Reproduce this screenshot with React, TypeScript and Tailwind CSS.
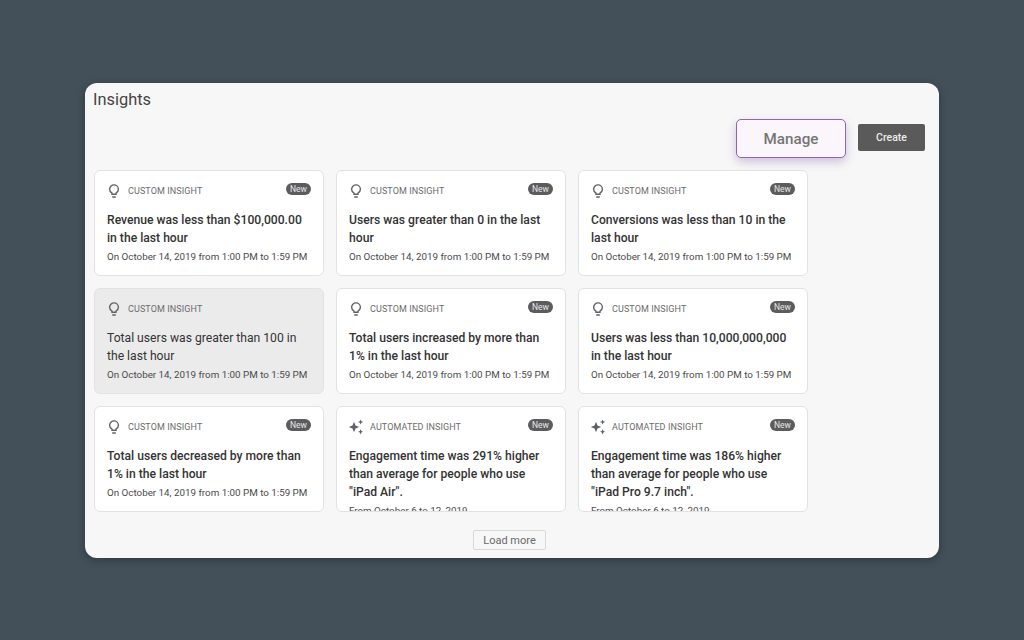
import React from "react";

function Bulb() {
  return (
    <svg width="14" height="16" viewBox="0 0 14 16" fill="none" stroke="#5f6368" strokeWidth="1.4" className="shrink-0">
      <path d="M5 10.2C3.5 9.3 2.6 7.9 2.6 6.3 2.6 3.8 4.6 1.9 7 1.9s4.4 1.9 4.4 4.4c0 1.6-.9 3-2.4 3.9v1.1H5z" />
      <path d="M5.2 14h3.6" strokeWidth="1.5" />
    </svg>
  );
}

function Spark() {
  return (
    <svg width="16" height="16" viewBox="0 0 16 16" fill="#5f6368" className="shrink-0 -ml-[1px]">
      <path d="M6 2.8l1.5 3.7L11.2 8 7.500 9.500 6 13.200 4.500 9.500 .8 8l3.700-1.500z" />
      <path d="M12.6 .4l.8 1.800 1.800.8-1.800.8-.8 1.800-.8-1.800L10 3l1.800-.8z" />
      <path d="M12.6 10.200l.8 1.800 1.800.8-1.800.8-.8 1.800-.8-1.800-1.800-.8 1.800-.8z" />
    </svg>
  );
}

type C = { kind: "c" | "a"; lines: string[]; sub: string; isNew?: boolean; active?: boolean };
const custom = "On October 14, 2019 from 1:00 PM to 1:59 PM";
const cards: C[] = [
  { kind: "c", lines: ["Revenue was less than $100,000.00", "in the last hour"], sub: custom, isNew: true },
  { kind: "c", lines: ["Users was greater than 0 in the last", "hour"], sub: custom, isNew: true },
  { kind: "c", lines: ["Conversions was less than 10 in the", "last hour"], sub: custom, isNew: true },
  { kind: "c", lines: ["Total users was greater than 100 in", "the last hour"], sub: custom, active: true },
  { kind: "c", lines: ["Total users increased by more than", "1% in the last hour"], sub: custom, isNew: true },
  { kind: "c", lines: ["Users was less than 10,000,000,000", "in the last hour"], sub: custom, isNew: true },
  { kind: "c", lines: ["Total users decreased by more than", "1% in the last hour"], sub: custom, isNew: true },
  { kind: "a", lines: ["Engagement time was 291% higher", "than average for people who use", "\"iPad Air\"."], sub: "From October 6 to 12, 2019", isNew: true },
  { kind: "a", lines: ["Engagement time was 186% higher", "than average for people who use", "\"iPad Pro 9.7 inch\"."], sub: "From October 6 to 12, 2019", isNew: true },
];

function Card({ c }: { c: C }) {
  return (
    <div
      className={`h-[106px] overflow-hidden rounded-md border border-[#e2e2e2] px-[12px] pt-[11px] ${
        c.active ? "bg-[#ebebeb]" : "bg-white"
      }`}
    >
      <div className="flex h-[18px] items-center">
        <span className="flex w-[21px] shrink-0">
          {c.kind === "c" ? <span className="ml-[-0.5px]"><Bulb /></span> : <Spark />}
        </span>
        <span className="pt-[2px] text-[9px] tracking-[0.1px] text-[#6b6b6b]">
          {c.kind === "c" ? "CUSTOM INSIGHT" : "AUTOMATED INSIGHT"}
        </span>
        {c.isNew && (
          <span className="mb-[4px] ml-auto rounded-full bg-[#5c5c5c] px-[4px] text-[8.5px] leading-[12px] text-[#e8e8e8]">New</span>
        )}
      </div>
      <div className={`mt-[11px] text-[12.15px] leading-[18px] text-[#333] ${c.active ? "font-normal" : "font-medium"}`}>
        {c.lines.map((l) => (
          <div key={l} className="whitespace-nowrap">{l}</div>
        ))}
      </div>
      <div className="mt-[2px] whitespace-nowrap text-[9.8px] leading-[16px] text-[#4a4a4a]">{c.sub}</div>
    </div>
  );
}

export default function App() {
  return (
    <div className="flex h-[640px] w-[1024px] items-start bg-[#435059] pl-[85px] pt-[83px] font-['Roboto',sans-serif]">
      <div className="h-[475px] w-[854px] rounded-xl bg-[#f7f7f7] pl-[9px] pr-[14px] pt-[6px] shadow-[0_2px_8px_rgba(0,0,0,0.3)]">
        <div className="-ml-[1px] text-[16.4px] leading-[22px] text-[#444]">Insights</div>
        <div className="mt-[8px] flex h-[38px] items-center justify-end gap-[12px]">
          <button className="h-[39px] w-[110px] rounded-[5px] border-[1.5px] border-[#8f63b8] bg-[#faf6fb] pt-[2px] text-[15.2px] font-medium text-[#757575] shadow-[0_4px_10px_rgba(110,70,160,0.3)]">
            Manage
          </button>
          <button className="mb-[1px] h-[27px] w-[67px] rounded-[2px] bg-[#5a5a5a] pt-[1px] text-[10.5px] font-medium text-[#ececec]">
            Create
          </button>
        </div>
        <div className="mt-[13px] grid w-[714px] grid-cols-[230px_230px_230px] gap-x-[12px] gap-y-[12px]">
          {cards.map((c, i) => (
            <Card key={i} c={c} />
          ))}
        </div>
        <div className="mt-[18px] flex w-[831px] justify-center">
          <button className="h-[20px] w-[73px] rounded-[2px] border border-[#d8d8d8] pt-[2px] text-[11px] text-[#6a6a6a]">Load more</button>
        </div>
      </div>
    </div>
  );
}
